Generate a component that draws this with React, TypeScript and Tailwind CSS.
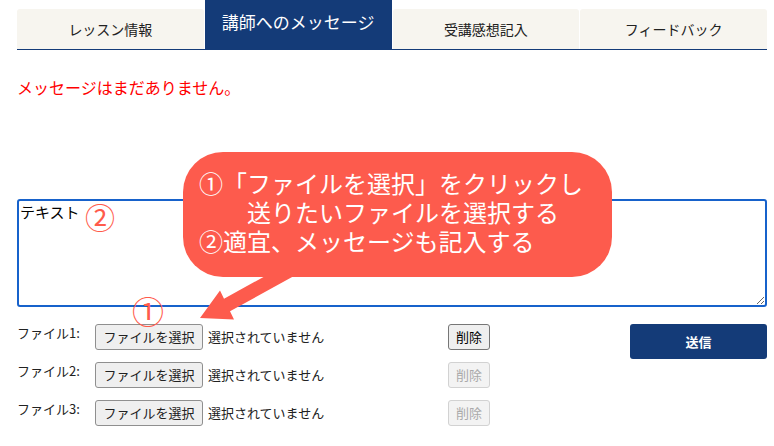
import React from 'react';

const tabs = ['レッスン情報', '講師へのメッセージ', '受講感想記入', 'フィードバック'];

const FileRow: React.FC<{ n: number; canDelete: boolean }> = ({ n, canDelete }) => (
  <div className="flex items-start h-[26px]">
    <div className="w-[431px] flex items-start">
      <span className="w-[78px] text-[13px] leading-[18px] text-[#222]">ファイル{n}:</span>
      <button className="h-[26px] w-[108px] bg-[#efefef] border border-[#8f8f8f] rounded-[3px] text-[13px] text-[#222]">
        ファイルを選択
      </button>
      <span className="ml-[5px] text-[13px] leading-[26px] text-[#222]">選択されていません</span>
    </div>
    {canDelete ? (
      <button className="h-[26px] w-[42px] bg-[#efefef] border border-[#767676] rounded-[3px] text-[13px] text-black">
        削除
      </button>
    ) : (
      <button disabled className="h-[26px] w-[42px] bg-[#f3f3f3] border border-[#d2d2d2] rounded-[3px] text-[13px] text-[#aaaaaa]">
        削除
      </button>
    )}
  </div>
);

export default function App() {
  return (
    <div className="relative w-[774px] h-[446px] bg-white overflow-hidden font-['Noto_Sans_CJK_JP',sans-serif]">
      <div className="ml-[17px] w-[750px]">
        {/* Tabs */}
        <div className="grid grid-cols-4 gap-px h-[50px] items-end border-b border-[#143b78]">
          {tabs.map((t, i) =>
            i === 1 ? (
              <div key={t} className="h-[49px] bg-[#143b78] text-white text-[17px] flex items-center justify-center pb-[5px]">
                {t}
              </div>
            ) : (
              <div key={t} className="h-[40px] bg-[#f7f5ef] rounded-t-[3px] text-[14px] text-[#222] flex items-center justify-center">
                {t}
              </div>
            )
          )}
        </div>

        <p className="mt-[25px] text-[16px] leading-[24px] text-[#ff0000]">メッセージはまだありません。</p>

        <textarea
          defaultValue="テキスト"
          className="mt-[100px] block w-[750px] h-[108px] border-2 border-[#1762cb] rounded-[3px] p-[1px] text-[15px] leading-[20px] text-black outline-none"
        />

        {/* Files + send */}
        <div className="mt-[17px] flex items-start">
          <div className="flex flex-col gap-[12px]">
            <FileRow n={1} canDelete />
            <FileRow n={2} canDelete={false} />
            <FileRow n={3} canDelete={false} />
          </div>
          <button className="ml-auto h-[35px] w-[137px] bg-[#143b78] rounded-[3px] text-white text-[13px] font-bold">
            送信
          </button>
        </div>
      </div>

      {/* Annotation overlay */}
      <svg className="absolute left-0 top-0 pointer-events-none" width="774" height="446">
        <polygon
          points="302,255.7 224,298.7 220,290.6 200,318 234,319.4 230,311.3 308,268.3"
          fill="#fd5b4d"
        />
      </svg>
      <div className="absolute left-[183px] top-[152px] w-[429px] h-[125px] rounded-[40px] bg-[#fd5b4d] pl-[16px] pt-[16px] text-white text-[24px] leading-[29px] whitespace-nowrap">
        <div>①「ファイルを選択」をクリックし</div>
        <div className="pl-[48px]">送りたいファイルを選択する</div>
        <div>②適宜、メッセージも記入する</div>
      </div>
      <span className="absolute left-[85px] top-[201px] text-[30px] leading-[30px] text-[#ff5b4b]">②</span>
      <span className="absolute left-[132px] top-[296px] text-[32px] leading-[28px] text-[#ff5b4b]">①</span>
    </div>
  );
}
